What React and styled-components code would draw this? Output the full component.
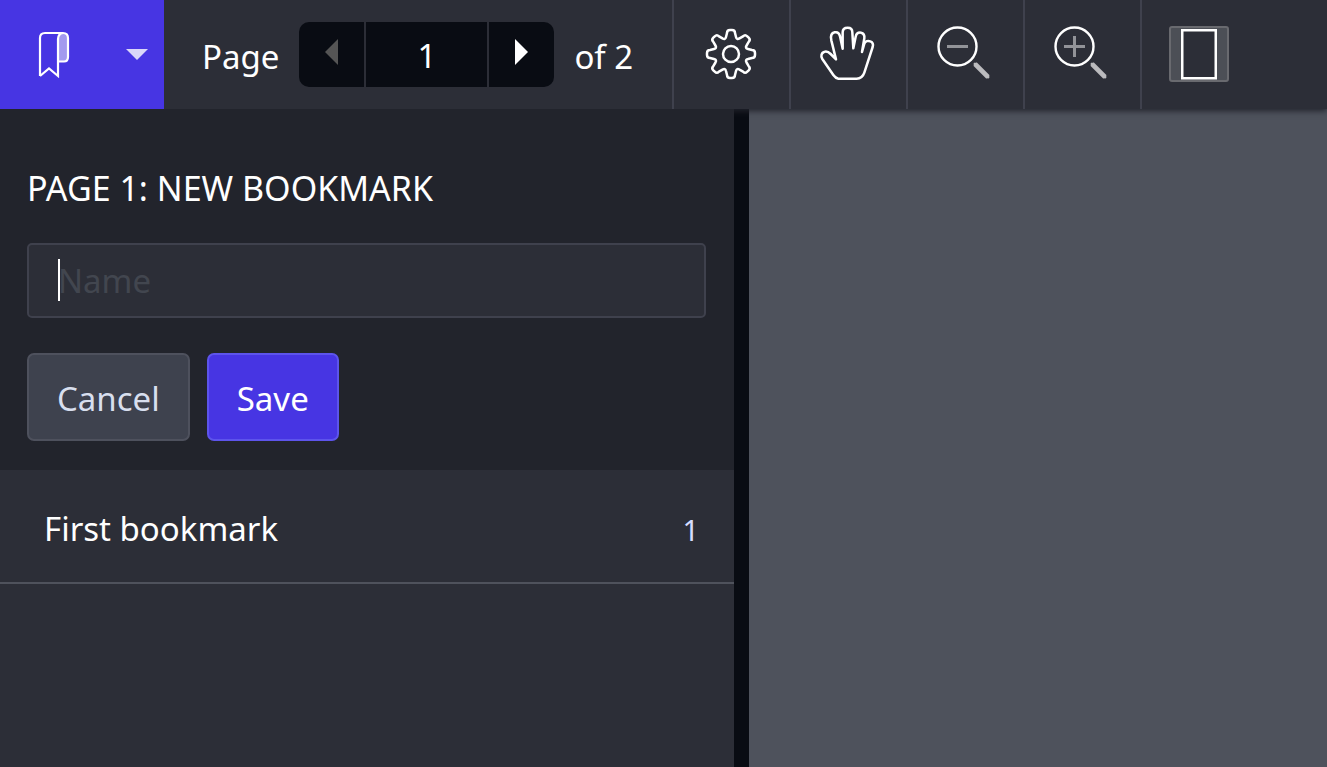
import React, {useState} from "react";
import styled, {createGlobalStyle} from "styled-components";

const GlobalStyle = createGlobalStyle`
  * {
    box-sizing: border-box;
  }
  html, body, #root {
    height: 100%;
    margin: 0;
  }
  body, button, input {
    font-family: "Noto Sans", "Open Sans", sans-serif;
    font-size: 33px;
    line-height: 48px;
    color: #ffffff;
  }
`;

const Viewer = styled.div`
  display: flex;
  flex-direction: column;
  height: 100%;
  overflow: hidden;
  background: #4e525c;
`;

const Toolbar = styled.header`
  display: flex;
  flex: none;
  height: 109px;
  background: #2c2e37;
  box-shadow: 0 2px 6px #22242c;
  z-index: 1;
`;

const PlainButton = styled.button`
  display: flex;
  align-items: center;
  justify-content: center;
  margin: 0;
  padding: 0;
  border: 0;
  background: none;
  cursor: pointer;
`;

const PanelToggle = styled(PlainButton)`
  justify-content: space-between;
  width: 164px;
  padding: 0 16px 0 36px;
  background: #4735e3;
`;

const PageNav = styled.div`
  display: flex;
  align-items: center;
  width: 508px;
  padding-left: 38px;
  gap: 20px;
`;

const PageText = styled.label`
  padding-top: 4px;
`;

const Pager = styled.div`
  display: flex;
  gap: 2px;
  height: 65px;
  border-radius: 10px;
  overflow: hidden;
`;

const PagerButton = styled(PlainButton)`
  width: 65px;
  padding-bottom: 5px;
  background: #090c13;
  color: ${props => props.disabled ? "#555555" : "#ffffff"};
`;

const PageInput = styled.input`
  width: 121px;
  padding: 2px 0 0;
  border: 0;
  outline: 0;
  background: #090c13;
  text-align: center;
`;

const ToolButton = styled(PlainButton)`
  width: 117px;
  padding: 0 2px 2px 0;
  border-left: 2px solid #3f414d;

  & svg {
    overflow: visible;
  }
`;

const Body = styled.div`
  display: grid;
  grid-template-columns: minmax(0, 734fr) 15px minmax(0, 578fr);
  flex: 1;
  min-height: 0;
`;

const Sidebar = styled.aside`
  position: relative;
  z-index: 2;
  background: #2c2e37;
`;

const Divider = styled.div`
  background: #090c13;
`;

const BookmarkForm = styled.form`
  padding: 55px 28px 29px 27px;
  background: #22242c;
`;

const FormTitle = styled.h2`
  margin: 0 0 31px;
  font-size: 34px;
  font-weight: 400;
  text-transform: uppercase;
`;

const NameField = styled.div`
  position: relative;
`;

const NameInput = styled.input`
  display: block;
  width: 100%;
  height: 75px;
  padding: 0 29px;
  border: 2px solid #3f414d;
  border-radius: 5px;
  outline: 0;
  background: #2c2e37;
  caret-color: transparent;

  &::placeholder {
    color: #42464f;
    opacity: 1;
  }
`;

const Caret = styled.span`
  position: absolute;
  top: 16px;
  left: 31px;
  width: 2px;
  height: 42px;
  background: #ffffff;
`;

const Actions = styled.div`
  display: flex;
  gap: 17px;
  margin-top: 35px;
`;

const ActionButton = styled(PlainButton)`
  height: 88px;
  padding: 4px 28px 0;
  border: 2px solid ${props => props.$primary ? "#5d54ec" : "#4e515d"};
  border-radius: 7px;
  background: ${props => props.$primary ? "#4735e3" : "#3e424e"};
  color: ${props => props.$primary ? "#ffffff" : "#d8dfee"};
`;

const BookmarkList = styled.ul`
  margin: 0;
  padding: 0;
  list-style: none;
`;

const BookmarkRow = styled.li`
  border-bottom: 2px solid #4f525c;
`;

const BookmarkLink = styled.a`
  display: flex;
  align-items: baseline;
  justify-content: space-between;
  height: 112px;
  padding: 35px 35px 0 44px;
  color: #ffffff;
  text-decoration: none;
`;

const PageNumber = styled.span`
  font-size: 29px;
  color: #d6dcff;
`;

const GEAR_TOOTH = [[-5, -17], [-4, -21], [-4, -24], [-1, -24], [1, -24], [4, -24], [4, -21], [5, -17], [5.7, -13.9]];

function gearPath() {
  let d = "";
  for (let i = 0; i < 8; i++) {
    const a = i * Math.PI / 4;
    const p = GEAR_TOOTH.map(([x, y]) => {
      const rx = x * Math.cos(a) - y * Math.sin(a);
      const ry = x * Math.sin(a) + y * Math.cos(a);
      return `${rx.toFixed(2)} ${ry.toFixed(2)}`;
    });
    d += `${i === 0 ? "M" : ""}${p[0]} L${p[1]} Q${p[2]} ${p[3]} L${p[4]} Q${p[5]} ${p[6]} L${p[7]} Q${p[8]} `;
  }
  return `${d}-5 -17Z`;
}

function BookmarkIcon() {
  return (
    <svg width="36" height="50" viewBox="0 0 36 50" fill="none" stroke="#ffffff" strokeWidth="2.200">
      <path d="M22 32V10Q22 3 27 3Q32 3 32 9V28Q32 32 28 32Z" fill="#a39aef" stroke="none"/>
      <path d="M4 46V8Q4 3 9 3H27Q32 3 32 8V27Q32 31.500 28 31.500H22"/>
      <path d="M27 3Q22 4 22 9V46L13 38.500L4 46"/>
    </svg>
  );
}

function DropIcon() {
  return (
    <svg width="22" height="11" viewBox="0 0 22 11" fill="#dad7f9">
      <path d="M0 0H22L11 11Z"/>
    </svg>
  );
}

function ArrowIcon({back}) {
  return (
    <svg width="13" height="26" viewBox="0 0 13 26" fill="currentColor">
      <path d={back ? "M13 0V26L0 13Z" : "M0 0V26L13 13Z"}/>
    </svg>
  );
}

function GearIcon() {
  return (
    <svg width="52" height="52" viewBox="-26 -26 52 52" fill="none" stroke="#ffffff" strokeWidth="2.500" strokeLinejoin="round">
      <path d={gearPath()}/>
      <circle r="8"/>
    </svg>
  );
}

function HandIcon() {
  return (
    <svg width="55" height="55" viewBox="45 49 165 165" fill="none" stroke="#ffffff" strokeWidth="7.500" strokeLinejoin="round">
      <path
        d="M100 207Q92 206 85 196L52 148C46 138 50 130 57 127C65 123 72 128 77 133L93 149L79 92C76 78 80 70 89 68C98 66 103 72 105 80L113 117V68C113 58 119 54 128 54C137 54 142 60 142 68L145 116L152 81C154 72 161 68 168 69C177 71 179 78 178 86L171 127L178 102C181 94 189 92 196 95C204 98 205 105 203 112L178 189Q172 207 155 207Z"/>
    </svg>
  );
}

function ZoomIcon({plus}) {
  return (
    <svg width="56" height="56" viewBox="0 0 56 56" fill="none">
      <circle cx="20.500" cy="20.500" r="19" stroke="#ffffff" strokeWidth="2.400"/>
      <path d={plus ? "M10 20.500H31M20.500 10V31" : "M10 20.500H31"} stroke="#929398" strokeWidth="3"/>
      <path d="M38 38L51 51" stroke="#bbbbbe" strokeWidth="4.600"/>
      <path d="M38 38L51 51" stroke="#bbbbbe" strokeWidth="3" strokeLinecap="round"/>
    </svg>
  );
}

function FitPageIcon() {
  return (
    <svg width="60" height="56" viewBox="0 0 60 56">
      <rect x="1" y="1" width="58" height="54" rx="2" fill="#4c4f56" stroke="#696a6f" strokeWidth="2"/>
      <rect x="13.250" y="4.250" width="33.500" height="48" fill="#2c2e37" stroke="#ffffff" strokeWidth="2.500"/>
    </svg>
  );
}

const bookmarks = [{name: "First bookmark", page: 1}];

export default function App() {
  const [page, setPage] = useState("1");
  const [name, setName] = useState("");

  return (
    <Viewer>
      <GlobalStyle/>
      <Toolbar>
        <PanelToggle type="button" aria-label="Bookmarks">
          <BookmarkIcon/>
          <DropIcon/>
        </PanelToggle>
        <PageNav>
          <PageText htmlFor="page">Page</PageText>
          <Pager>
            <PagerButton type="button" aria-label="Previous page" disabled><ArrowIcon back/></PagerButton>
            <PageInput id="page" value={page} onChange={e => setPage(e.target.value)}/>
            <PagerButton type="button" aria-label="Next page"><ArrowIcon/></PagerButton>
          </Pager>
          <PageText as="span">of 2</PageText>
        </PageNav>
        <ToolButton type="button" aria-label="Settings"><GearIcon/></ToolButton>
        <ToolButton type="button" aria-label="Pan"><HandIcon/></ToolButton>
        <ToolButton type="button" aria-label="Zoom out"><ZoomIcon/></ToolButton>
        <ToolButton type="button" aria-label="Zoom in"><ZoomIcon plus/></ToolButton>
        <ToolButton type="button" aria-label="Fit page"><FitPageIcon/></ToolButton>
      </Toolbar>

      <Body>
        <Sidebar>
          <BookmarkForm onSubmit={e => e.preventDefault()}>
            <FormTitle>Page 1: New bookmark</FormTitle>
            <NameField>
              <NameInput
                aria-label="Name"
                placeholder="Name"
                value={name}
                onChange={e => setName(e.target.value)}/>
              {name === "" && <Caret/>}
            </NameField>
            <Actions>
              <ActionButton type="button">Cancel</ActionButton>
              <ActionButton type="submit" $primary>Save</ActionButton>
            </Actions>
          </BookmarkForm>
          <BookmarkList>
            {bookmarks.map(b => (
              <BookmarkRow key={b.name}>
                <BookmarkLink href={`#page=${b.page}`}>
                  {b.name}
                  <PageNumber>{b.page}</PageNumber>
                </BookmarkLink>
              </BookmarkRow>
            ))}
          </BookmarkList>
        </Sidebar>
        <Divider/>
      </Body>
    </Viewer>
  );
}
